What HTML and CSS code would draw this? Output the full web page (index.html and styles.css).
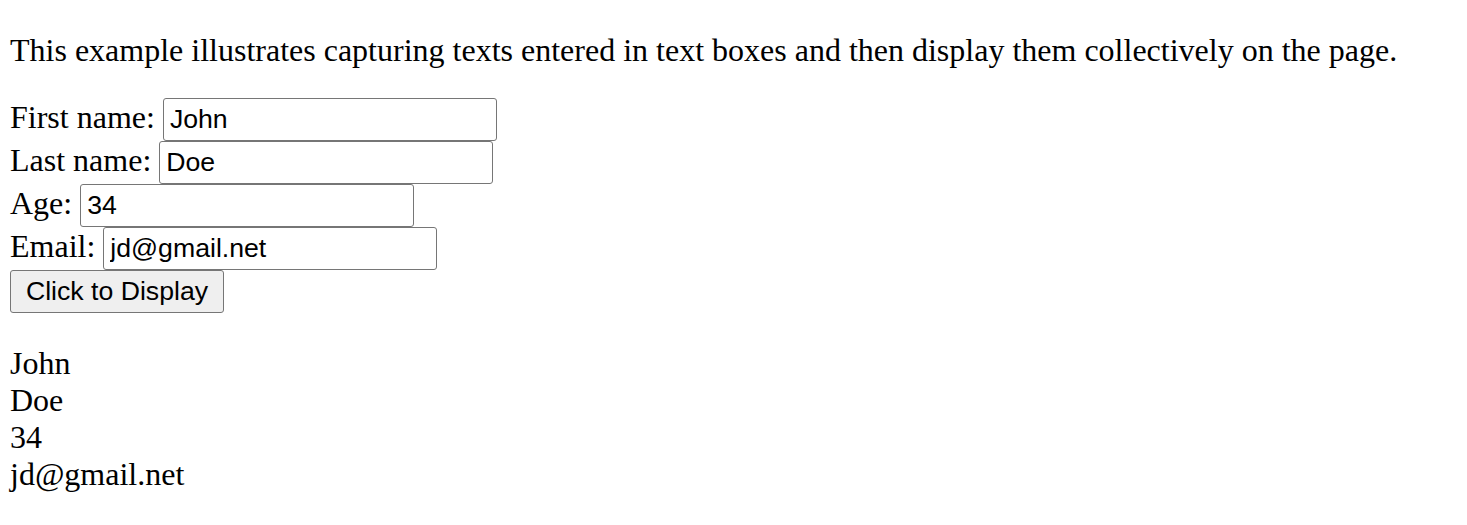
FILE: index.html
```html
<!DOCTYPE html>
<html>
<head>
<meta charset="utf-8">
<link rel="stylesheet" href="styles.css">
</head>
<body>
<p class="intro">This example illustrates capturing texts entered in text boxes and then display them collectively on the page.</p>
<form class="form">
First name: <input class="field" type="text" value="John"><br>
Last name: <input class="field" type="text" value="Doe"><br>
Age: <input class="field" type="text" value="34"><br>
Email: <input class="field" type="text" value="jd@gmail.net"><br>
<button class="btn" type="button">Click to Display</button>
</form>
<p class="output">John<br>Doe<br>34<br>jd@gmail.net</p>
</body>
</html>
```
FILE: styles.css
```css
html, body {
  background: #fff;
}
body {
  margin: 0;
  padding: 0 10px;
  font-family: "Liberation Serif", "Times New Roman", serif;
  font-size: 32px;
  color: #000;
}
.intro {
  margin: 32px 0 29px;
}
.form {
  margin: 0;
}
.field {
  box-sizing: border-box;
  width: 334px;
  height: 43px;
  font-family: "Liberation Sans", Arial, sans-serif;
  font-size: 26.67px;
  padding: 2px 6px;
  border: 1px solid #767676;
  border-radius: 3px;
  color: #000;
  background: #fff;
  margin: 0;
}
.btn {
  box-sizing: border-box;
  width: 214px;
  height: 43px;
  font-family: "Liberation Sans", Arial, sans-serif;
  font-size: 26.67px;
  padding: 0 12px;
  border: 1px solid #767676;
  border-radius: 3px;
  background: #efefef;
  color: #000;
  margin: 0;
}
.output {
  margin: 32px 0;
}
```
